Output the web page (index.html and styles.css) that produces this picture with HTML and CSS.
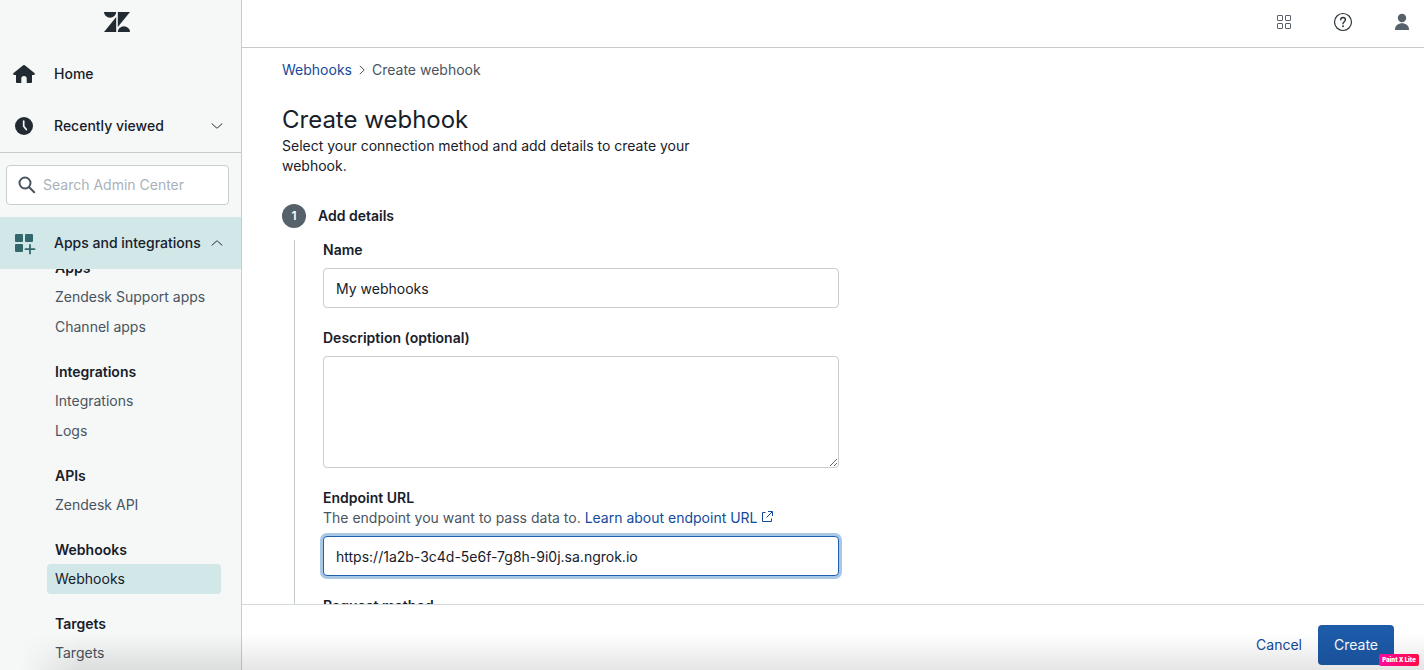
FILE: index.html
```html
<!DOCTYPE html>
<html lang="en">
<head>
  <meta charset="UTF-8">
  <meta name="viewport" content="width=device-width, initial-scale=1">
  <title>Create webhook - Admin Center</title>
  <link rel="stylesheet" href="styles.css">
</head>
<body>
  <aside class="sidebar">
    <div class="logo">
      <svg width="26" height="20" viewBox="0 0 26 20" fill="currentColor" role="img" aria-label="Zendesk">
        <path d="M12.2 4.9V20H0z"/>
        <path d="M0 0h12.2a6.1 5.8 0 0 1-12.2 0z"/>
        <path d="M13.8 20a6.1 5.8 0 0 1 12.2 0z"/>
        <path d="M13.8 15.1V0H26z"/>
      </svg>
    </div>

    <nav class="main-nav">
      <a class="nav-row" href="#">
        <svg class="nav-icon" width="22" height="20" viewBox="0 0 22 20" fill="currentColor">
          <path d="M10.2 1.3a1.2 1.2 0 0 1 1.6 0l9.6 7.8c.9.8.4 1.9-.7 1.900H19v6.800c0 .8-.4 1.200-1.200 1.200h-4.100v-4.400a2.700 2.700 0 0 0-5.400 0V19H4.200c-.8 0-1.200-.4-1.200-1.200V11H1.300C.2 11-.3 9.900.6 9.100z"/>
        </svg>
        <span>Home</span>
      </a>
      <button class="nav-row" type="button">
        <svg class="nav-icon" width="22" height="20" viewBox="0 0 22 20">
          <circle cx="11" cy="10" r="9" fill="currentColor"/>
          <path d="M10.700 5v5.200l2.600 3.300" fill="none" stroke="#f6f8f7" stroke-width="1.700" stroke-linecap="round"/>
        </svg>
        <span>Recently viewed</span>
        <svg class="chevron" width="12" height="6" viewBox="0 0 12 6"><path d="M1 .8 5.300 4.700q.7.6 1.400 0L11 .8"/></svg>
      </button>
    </nav>

    <div class="search">
      <label class="search-box" for="search">
        <svg width="18" height="18" viewBox="0 0 18 18" fill="none" stroke="currentColor" stroke-width="2" stroke-linecap="round">
          <title>Search</title>
          <circle cx="7" cy="7" r="5.500"/>
          <path d="m11.200 11.200 5 5"/>
        </svg>
        <input type="search" id="search" placeholder="Search Admin Center">
      </label>
    </div>

    <button class="nav-row active" type="button" aria-expanded="true">
      <svg class="nav-icon" width="22" height="20" viewBox="0 0 22 20" fill="currentColor">
        <rect x="2" y="1" width="8" height="8" rx="1"/>
        <rect x="12" y="1" width="8" height="8" rx="1"/>
        <rect x="2" y="11" width="8" height="8" rx="1"/>
        <path d="M17 12v8.500M12.500 16.200h9" stroke="currentColor" stroke-width="1.800" stroke-linecap="round"/>
      </svg>
      <span>Apps and integrations</span>
      <svg class="chevron" width="12" height="6" viewBox="0 0 12 6"><path d="M1 5.200 5.300 1.300q.7-.6 1.400 0L11 5.200"/></svg>
    </button>

    <div class="sub-nav">
      <nav class="sub-nav-list">
        <h2>Apps</h2>
        <a href="#">Zendesk Support apps</a>
        <a href="#">Channel apps</a>
        <h2>Integrations</h2>
        <a href="#">Integrations</a>
        <a href="#">Logs</a>
        <h2>APIs</h2>
        <a href="#">Zendesk API</a>
        <h2>Webhooks</h2>
        <a href="#" class="current">Webhooks</a>
        <h2>Targets</h2>
        <a href="#">Targets</a>
      </nav>
    </div>
  </aside>

  <div class="page">
    <header class="topbar">
      <button type="button" aria-label="Products">
        <svg width="16" height="16" viewBox="0 0 16 16" fill="none" stroke="currentColor">
          <rect x="1.500" y="1.500" width="5" height="5" rx=".5"/>
          <rect x="9.500" y="1.500" width="5" height="5" rx=".5"/>
          <rect x="1.500" y="9.500" width="5" height="5" rx=".5"/>
          <rect x="9.500" y="9.500" width="5" height="5" rx=".5"/>
        </svg>
      </button>
      <button type="button" class="help" aria-label="Help">
        <svg width="20" height="20" viewBox="0 0 20 20" fill="none" stroke="currentColor" stroke-width="1.200" stroke-linecap="round">
          <circle cx="10" cy="10" r="8.500"/>
          <path d="M7.700 7.800c0-3.100 4.700-3.100 4.700 0 0 1.900-2.400 1.900-2.400 4" stroke-width="1.400"/>
          <circle cx="10" cy="14.200" r=".4"/>
        </svg>
      </button>
      <button type="button" aria-label="Profile">
        <svg width="16" height="18" viewBox="0 0 16 18" fill="currentColor">
          <circle cx="8" cy="5" r="4.200"/>
          <path d="M1 16.500c0-8.300 14-8.300 14 0 0 .4-.2.500-.5.500h-13c-.3 0-.5-.1-.5-.5z"/>
        </svg>
      </button>
    </header>

    <main class="content">
      <nav class="breadcrumb">
        <a href="#">Webhooks</a>
        <svg width="6" height="10" viewBox="0 0 6 10" fill="none" stroke="currentColor"><path d="m.8.8 4.400 4.200-4.400 4.200"/></svg>
        <span>Create webhook</span>
      </nav>

      <h1>Create webhook</h1>
      <p class="intro">Select your connection method and add details to create your webhook.</p>

      <div class="step">
        <span class="step-number">1</span>
        <h2>Add details</h2>
      </div>

      <form class="step-body" id="webhook-form">
        <div class="field">
          <label for="name">Name</label>
          <input type="text" id="name" value="My webhooks">
        </div>
        <div class="field">
          <label for="description">Description (optional)</label>
          <textarea id="description"></textarea>
        </div>
        <div class="field">
          <label for="endpoint">Endpoint URL</label>
          <p class="hint">The endpoint you want to pass data to.
            <a href="#">Learn about endpoint URL
              <svg width="12" height="12" viewBox="0 0 12 12" fill="none" stroke="currentColor">
                <path d="M4.500 1.500h-3v9h9v-3M7 .5h4.500V5M11.200.8 5.500 6.500"/>
              </svg></a>
          </p>
          <input type="text" id="endpoint" class="focused" value="https://1a2b-3c4d-5e6f-7g8h-9i0j.sa.ngrok.io">
        </div>
        <div class="field">
          <label for="method">Request method</label>
          <select id="method">
            <option>POST</option>
          </select>
        </div>
      </form>
    </main>

    <footer class="actions">
      <button type="button" class="btn-cancel">Cancel</button>
      <button type="submit" form="webhook-form" class="btn-create">Create</button>
    </footer>
  </div>

  <div class="bottom-shade"></div>
  <div class="watermark">Paint X Lite</div>
</body>
</html>
```

FILE: styles.css
```css
* {
  box-sizing: border-box;
}

body {
  margin: 0;
  height: 100vh;
  display: grid;
  grid-template-columns: 242px 1fr;
  font-family: Inter, "Liberation Sans", sans-serif;
  font-size: 14px;
  line-height: 20px;
  color: #17202a;
  background: #fff;
  overflow: hidden;
}

a {
  color: #144a9c;
  text-decoration: none;
}

button,
input,
textarea,
select {
  font: inherit;
  color: inherit;
}

button {
  border: none;
  background: none;
  padding: 0;
  cursor: pointer;
}

h1,
h2,
p {
  margin: 0;
}

/* Sidebar */
.sidebar {
  display: flex;
  flex-direction: column;
  min-height: 0;
  background: #f6f8f7;
  border-right: 1px solid #c6cbcd;
}

.logo {
  display: flex;
  justify-content: center;
  height: 48px;
  padding: 12px 7px 0 0;
  color: #222b31;
}

.main-nav {
  border-bottom: 1px solid #c6cbcd;
}

.nav-row {
  display: flex;
  align-items: center;
  width: 100%;
  height: 52px;
  padding: 0 18px 0 13px;
  font-weight: 500;
  color: #17202a;
  text-align: left;
}

.nav-row span {
  flex: 1;
  margin-left: 19px;
}

.nav-icon {
  color: #222b31;
  overflow: visible;
}

.chevron {
  fill: none;
  stroke: #222b31;
  stroke-width: 1;
  stroke-linecap: round;
}

.nav-row.active {
  flex-shrink: 0;
  background: #d2e7e8;
}

.active .nav-icon {
  color: #32676b;
}

.search {
  padding: 12px 12px 12px 6px;
}

.search-box {
  display: flex;
  align-items: center;
  gap: 7px;
  height: 40px;
  padding: 0 11px;
  border: 1px solid #c6cdd3;
  border-radius: 4px;
  background: #fff;
  color: #4a5560;
}

.search-box input {
  flex: 1;
  min-width: 0;
  padding: 0;
  border: none;
  outline: none;
  background: none;
}

.search-box input::placeholder {
  color: #a9b2ba;
}

.sub-nav {
  flex: 1;
  min-height: 0;
  overflow: hidden;
}

/* list is scrolled under the section row */
.sub-nav-list {
  margin: -31px 20px 0 47px;
}

.sub-nav-list h2 {
  padding: 20px 8px 4px;
  font-size: 14px;
  font-weight: 600;
}

.sub-nav-list a {
  display: block;
  padding: 5px 8px;
  border-radius: 4px;
  color: #49545f;
}

.sub-nav-list .current {
  background: #d2e7e8;
  color: #17202a;
}

/* Page */
.page {
  display: flex;
  flex-direction: column;
  min-width: 0;
  min-height: 0;
}

.topbar {
  display: flex;
  align-items: center;
  justify-content: flex-end;
  gap: 41px;
  flex-shrink: 0;
  height: 48px;
  padding: 0 14px 4px 0;
  border-bottom: 1px solid #c9c9c9;
  color: #56616b;
}

.topbar button {
  display: flex;
}

.topbar .help {
  color: #2c3338;
}

.content {
  flex: 1;
  min-height: 0;
  padding: 12px 40px 0;
  overflow: hidden;
}

.breadcrumb {
  display: flex;
  align-items: center;
  gap: 7px;
  color: #49545f;
}

h1 {
  margin-top: 24px;
  font-size: 24px;
  font-weight: 400;
  line-height: 32px;
}

.intro {
  max-width: 420px;
}

.step {
  display: flex;
  align-items: center;
  gap: 12px;
  margin-top: 28px;
}

.step-number {
  width: 24px;
  height: 24px;
  border-radius: 50%;
  background: #56616b;
  color: #fff;
  font-size: 12px;
  font-weight: 600;
  line-height: 24px;
  text-align: center;
}

.step h2 {
  font-size: 14px;
  font-weight: 600;
}

.step-body {
  display: flex;
  flex-direction: column;
  gap: 20px;
  margin: 12px 0 0 12px;
  padding-left: 28px;
  border-left: 1px solid #c2c8cc;
}

.field {
  display: flex;
  flex-direction: column;
  max-width: 516px;
}

.field label {
  font-weight: 600;
}

.field input,
.field textarea,
.field select {
  height: 40px;
  margin-top: 8px;
  padding: 0 12px;
  border: 1px solid #c6cdd3;
  border-radius: 4px;
  background: #fff;
  outline: none;
}

.field textarea {
  height: 112px;
  padding: 10px 12px;
  resize: vertical;
}

.field .focused {
  border-color: #1f5fae;
  box-shadow: 0 0 0 3px #a9c8e6;
}

.hint {
  color: #49545f;
}

/* Footer */
.actions {
  display: flex;
  justify-content: flex-end;
  flex-shrink: 0;
  padding: 20px 30px 5px;
  border-top: 1px solid #d3d8db;
  background: #fff;
}

.actions button {
  height: 40px;
  padding: 0 16px;
  border-radius: 4px;
}

.btn-cancel {
  color: #144a9c;
}

.actions .btn-create {
  background: #1d5aa8;
  color: #fff;
}

/* Overlays */
.bottom-shade {
  position: fixed;
  left: 0;
  right: 0;
  bottom: 0;
  height: 36px;
  background: linear-gradient(to bottom, rgba(0, 0, 0, 0), rgba(0, 0, 0, 0.1));
  -webkit-mask-image: linear-gradient(to right, transparent 20px, #000 80px);
  mask-image: linear-gradient(to right, transparent 20px, #000 80px);
  pointer-events: none;
}

.watermark {
  position: fixed;
  right: 5px;
  bottom: 4px;
  width: 40px;
  border-radius: 2px;
  background: linear-gradient(to right, #ff0a9c, #ff0a46);
  color: #fff;
  font-size: 6px;
  font-weight: 900;
  line-height: 12px;
  text-align: center;
  white-space: nowrap;
}
```
